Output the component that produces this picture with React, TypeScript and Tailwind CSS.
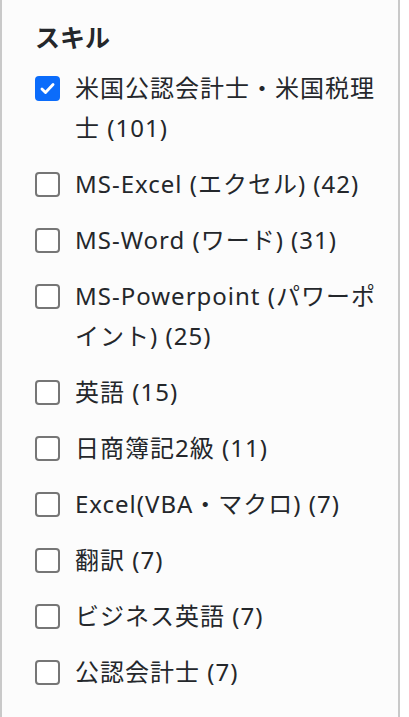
import { useState } from "react";

const skills = [
  { label: "米国公認会計士・米国税理士", count: 101, checked: true },
  { label: "MS-Excel (エクセル)", count: 42 },
  { label: "MS-Word (ワード)", count: 31 },
  { label: "MS-Powerpoint (パワーポイント)", count: 25 },
  { label: "英語", count: 15 },
  { label: "日商簿記2級", count: 11 },
  { label: "Excel(VBA・マクロ)", count: 7 },
  { label: "翻訳", count: 7 },
  { label: "ビジネス英語", count: 7 },
  { label: "公認会計士", count: 7 },
];

const SkillFilter = () => {
  const [checked, setChecked] = useState<boolean[]>(skills.map((s) => !!s.checked));

  const toggle = (i: number) => {
    setChecked((prev) => prev.map((v, j) => (j === i ? !v : v)));
  };

  return (
    <div
      className="w-[400px] h-[717px] border-x-2 border-[#c9c9c9] bg-[#fcfcfc] pl-[33px] pr-[14px] pt-[19px] text-[#24272b]"
      style={{ fontFamily: '"Noto Sans", "Noto Sans CJK JP", sans-serif' }}
    >
      <h2 className="text-[25px] leading-[36px] font-bold mb-[13px]">スキル</h2>
      <ul className="flex flex-col gap-4">
        {skills.map((skill, i) => (
          <li key={skill.label}>
            <label className="flex items-start gap-[15px] cursor-pointer">
              <span className="h-[40px] flex items-center shrink-0">
                <button
                  type="button"
                  onClick={() => toggle(i)}
                  className={
                    checked[i]
                      ? "w-[25px] h-[25px] rounded-[4px] bg-[#0b6cfb] flex items-center justify-center"
                      : "w-[25px] h-[25px] rounded-[4px] border-2 border-[#767676] bg-white"
                  }
                >
                  {checked[i] && (
                    <svg viewBox="0 0 24 24" className="w-[19px] h-[19px]">
                      <path
                        d="M5 12.5l4.5 4.5L19 7"
                        fill="none"
                        stroke="white"
                        strokeWidth="3.6"
                        strokeLinecap="round"
                        strokeLinejoin="round"
                      />
                    </svg>
                  )}
                </button>
              </span>
              <span className="text-[24px] leading-[40px] tracking-[1px]">
                {skill.label} ({skill.count})
              </span>
            </label>
          </li>
        ))}
      </ul>
    </div>
  );
};

export default function App() {
  return <SkillFilter />;
}
